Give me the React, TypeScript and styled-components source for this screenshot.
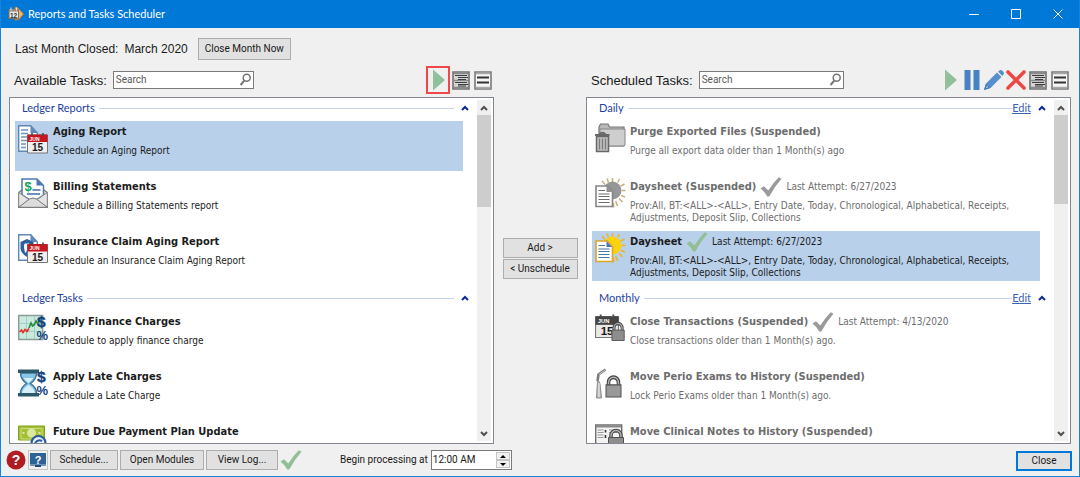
import React from "react";
import styled, { createGlobalStyle, css } from "styled-components";

const ui = '"Liberation Sans", Arial, sans-serif';
const caption = 'Lato, "Open Sans", sans-serif';
const humanist = '"DejaVu Sans Condensed", "DejaVu Sans", sans-serif';
const compact = 'Roboto, "Liberation Sans", sans-serif';

const GlobalStyle = createGlobalStyle`
  *, *::before, *::after { box-sizing: border-box; }
  body { margin: 0; background: #f0f0f0; font-family: ${ui}; color: #1a1a1a; }
  button, input { font: inherit; color: inherit; margin: 0; }
  ul { list-style: none; margin: 0; padding: 0; }
  h1, h2, h3, p { margin: 0; font-weight: normal; }
  svg { display: block; flex: none; }
`;

const Window = styled.div`
  display: flex;
  flex-direction: column;
  height: 100vh;
  min-height: 320px;
  border: 1px solid #1883d7;
  border-top: 0;
  background: #f0f0f0;
`;

const TitleBar = styled.header`
  display: flex;
  align-items: center;
  flex: none;
  height: 28px;
  padding-left: 7px;
  background: #0078d7;
  color: #fff;
`;

const WindowTitle = styled.h1`
  flex: 1;
  padding-left: 4px;
  font: 11px/16px ${caption};
`;

const CaptionButton = styled.button`
  display: flex;
  align-items: center;
  justify-content: center;
  width: 42px;
  height: 28px;
  padding: 0;
  border: 0;
  background: none;
`;

const MonthBar = styled.div`
  display: flex;
  align-items: center;
  flex: none;
  gap: 6px;
  height: 38px;
  padding: 4px 14px 0;
  font-size: 12px;
`;

const MonthValue = styled.span`
  padding-right: 4px;
`;

const PushButton = styled.button<{ $width: number; $tall?: boolean; $primary?: boolean }>`
  width: ${(p) => p.$width}px;
  height: ${(p) => (p.$tall ? 22 : 20)}px;
  padding: 0;
  border: ${(p) => (p.$primary ? "2px solid #0078d7" : "1px solid #adadad")};
  background: #e1e1e1;
  font: 10px/16px ${compact};
  white-space: nowrap;
`;

const Workspace = styled.main`
  display: grid;
  grid-template-columns: minmax(0, 1fr) 92px minmax(0, 1fr);
  grid-template-rows: minmax(0, 1fr);
  flex: 1;
  min-height: 0;
  padding: 0 8px;
`;

const Panel = styled.section`
  display: flex;
  flex-direction: column;
  min-height: 0;
`;

const Toolbar = styled.div`
  display: flex;
  align-items: center;
  flex: none;
  height: 28px;
  margin-bottom: 3px;
  padding-left: 5px;
`;

const ToolbarLabel = styled.label`
  padding-right: 6px;
  font-size: 13px;
  white-space: nowrap;
`;

const SearchBox = styled.div<{ $width: number }>`
  display: flex;
  align-items: center;
  width: ${(p) => p.$width}px;
  height: 18px;
  padding: 0 1px 0 2px;
  border: 1px solid #7a7a7a;
  background: #fff;
`;

const SearchInput = styled.input`
  flex: 1;
  min-width: 0;
  padding: 0;
  border: 0;
  outline: 0;
  background: none;
  font: 10px/16px ${compact};
  &::placeholder { color: #5a5a5a; opacity: 1; }
`;

const Tools = styled.div`
  display: flex;
  margin-left: auto;
`;

const ToolButton = styled.button<{ $marked?: boolean }>`
  display: flex;
  align-items: center;
  justify-content: center;
  width: ${(p) => (p.$marked ? 24 : 22)}px;
  height: 28px;
  padding: 0;
  border: ${(p) => (p.$marked ? "2px solid #f04848" : "0")};
  background: none;
`;

const ListFrame = styled.div`
  display: flex;
  flex: 1;
  min-height: 0;
  border: 1px solid #828790;
  background: #fff;
`;

const ListBody = styled.div`
  flex: 1;
  min-width: 0;
  padding-left: 5px;
  overflow: hidden;
`;

const Scrollbar = styled.div`
  display: flex;
  flex-direction: column;
  align-items: center;
  flex: none;
  width: 14px;
  margin: 2px 2px 2px 0;
  background: #f0f0f0;
`;

const ScrollThumb = styled.div<{ $size: number }>`
  width: 14px;
  height: ${(p) => p.$size}%;
  margin-bottom: auto;
  background: #cdcdcd;
`;

const ScrollArrow = styled.button`
  display: flex;
  align-items: center;
  justify-content: center;
  flex: none;
  width: 14px;
  height: 15px;
  padding: 0;
  border: 0;
  background: none;
`;

const Group = styled.section`
  padding-bottom: 2px;
`;

const GroupHeader = styled.div`
  display: flex;
  align-items: center;
  height: 20px;
  margin-bottom: 3px;
  padding: 0 8px 0 7px;
  font: 11px/16px ${caption};
  color: #1e3f9e;
`;

const GroupName = styled.h2`
  font: inherit;
  white-space: nowrap;
`;

const GroupRule = styled.span`
  flex: 1;
  height: 1px;
  margin-left: 4px;
  background: #c5d3ea;
`;

const EditLink = styled.a`
  color: #3a62b5;
  text-decoration: underline;
`;

const CollapseButton = styled.button`
  display: flex;
  margin-left: 7px;
  padding: 0;
  border: 0;
  background: none;
`;

const TaskRow = styled.li<{ $selected?: boolean; $muted?: boolean }>`
  display: flex;
  gap: 4px;
  height: 50px;
  margin: 0 14px 5px 0;
  padding: 2px 3px;
  color: ${(p) => (p.$muted ? "#6d6d6d" : "#1c1c1c")};
  ${(p) => p.$selected && css`background: #b8d0ea;`}
`;

const TaskIcon = styled.span`
  flex: none;
  width: 31px;
  height: 32px;
`;

const TaskText = styled.div`
  flex: 1;
  min-width: 0;
`;

const TaskHeading = styled.div`
  display: flex;
  align-items: center;
  gap: 4px;
  height: 17px;
`;

const TaskTitle = styled.h3`
  font: bold 11px/17px ${humanist};
  white-space: nowrap;
`;

const Attempt = styled.span`
  font: 10px/16px ${humanist};
`;

const TaskDetail = styled.p`
  padding-top: 5px;
  font: 10px/12px ${humanist};
`;

const Transfer = styled.div`
  display: flex;
  flex-direction: column;
  align-items: center;
  justify-content: center;
  gap: 1px;
  padding-top: 6px;
`;

const StatusBar = styled.footer`
  display: flex;
  align-items: center;
  flex: none;
  gap: 2px;
  height: 32px;
  padding: 0 7px 0 5px;
`;

const IconButton = styled.button<{ $framed?: boolean }>`
  display: flex;
  align-items: center;
  justify-content: center;
  width: 20px;
  height: 20px;
  padding: 0;
  border: ${(p) => (p.$framed ? "1px solid #c4c4c4" : "0")};
  background: none;
`;

const TimeLabel = styled.label`
  padding: 0 1px 0 36px;
  font: 10px/16px ${compact};
`;

const TimeField = styled.div`
  display: flex;
  align-items: center;
  width: 81px;
  height: 20px;
  padding: 1px;
  border: 1px solid #7a7a7a;
  background: #fff;
`;

const TimeInput = styled.input`
  flex: 1;
  min-width: 0;
  padding: 0;
  border: 0;
  outline: 0;
  font: 10px/16px ${compact};
`;

const Spinner = styled.div`
  display: flex;
  flex-direction: column;
  width: 14px;
`;

const SpinButton = styled.button`
  display: flex;
  align-items: center;
  justify-content: center;
  height: 8px;
  padding: 0;
  border: 1px solid #c4c4c4;
  background: #f0f0f0;
`;

const CloseSlot = styled.div`
  margin-left: auto;
`;

const Chevron = ({ down, color = "#505050" }: { down?: boolean; color?: string }) => (
  <svg width="8" height="6" viewBox="0 0 8 6" fill="none" stroke={color} strokeWidth="2">
    <path d={down ? "M1 1l3 3 3-3" : "M1 5l3-3 3 3"} />
  </svg>
);

const Magnifier = () => (
  <svg width="13" height="14" viewBox="0 0 13 14" fill="none" stroke="#757575">
    <circle cx="7.700" cy="4.800" r="3.500" strokeWidth="1.500" />
    <path d="M5.200 7.600L1.600 12" strokeWidth="2" />
  </svg>
);

const Play = () => (
  <svg width="14" height="22" viewBox="0 0 14 22">
    <path d="M2 .5v21L14 11z" fill="#92c199" />
  </svg>
);

const Pause = () => (
  <svg width="16" height="20" viewBox="0 0 16 20" fill="#4682c4">
    <path d="M0.500 0h6v20h-6zM9.500 0h6v20h-6z" />
  </svg>
);

const Pencil = () => (
  <svg width="22" height="22" viewBox="0 0 22 22">
    <path d="M1 21l2-6.500L14 3.500l4.500 4.500L7.500 19z" fill="#568fce" />
    <path d="M1 21l1.900-6 4.200 4z" fill="#3f76b8" />
    <path d="M3.500 18.700l1-1.200" stroke="#e8f0f8" strokeWidth="1.200" />
    <path d="M15 2.800l1.700-1.500q1.200-.9 2.400.2l1.400 1.400q1.100 1.200.1 2.400L19.200 7z" fill="#568fce" />
    <path d="M14.300 2.800l5 5" stroke="#dfe9f4" strokeWidth="1" />
  </svg>
);

const Cross = () => (
  <svg width="20" height="20" viewBox="0 0 20 20" stroke="#ee4a45" strokeWidth="3.600" strokeLinecap="round">
    <path d="M2 2l16 16M18 2L2 18" />
  </svg>
);

const ExpandedRows = () => (
  <svg width="18" height="19" viewBox="0 0 18 19" fill="none">
    <path d="M1 1h16v17H1z" fill="#d4d4d4" stroke="#707070" strokeWidth="1.600" />
    <path d="M2 2.500h14M2 9.500h14M2 16.500h14" stroke="#8a8a8a" strokeWidth="1.600" />
    <path d="M3 4.500h12M6 6.500h10M6 8.500h8M3 11.500h12M6 13.500h10M6 15h8" stroke="#3d3d3d" strokeWidth="1.200" />
  </svg>
);

const CompactRows = () => (
  <svg width="18" height="19" viewBox="0 0 18 19" fill="none">
    <path d="M1 1h16v17H1z" fill="#f6f6f6" stroke="#7a7a7a" strokeWidth="1.600" />
    <path d="M2 2.500h14M2 16.500h14" stroke="#a8a8a8" strokeWidth="1.500" />
    <path d="M3 6.500h12M3 11.500h12" stroke="#333" strokeWidth="2" />
  </svg>
);

const Check = ({ color = "#92bf96" }: { color?: string }) => (
  <svg width="22" height="20" viewBox="0 0 22 20">
    <path d="M.5 11.500l3.500-2.300 4.300 4.300Q13 6 18.800.300l2.700 1.500Q14.500 9.500 9.300 19.500H7.300Q4.500 14.500.5 11.500z" fill={color} />
  </svg>
);

const svgText = { fontFamily: '"Liberation Sans", sans-serif', fontWeight: 700 };

const Calendar = ({ muted }: { muted?: boolean }) => (
  <g>
    <path d="M0 2h20v18H0z" fill={muted ? "#e9e9e9" : "#f1eeee"} stroke="#777" strokeWidth="1" />
    <path d="M0 1.500h20V9H0z" fill={muted ? "#444" : "#c9151e"} />
    <path d="M4.500 0v3M15.500 0v3" stroke="#4b4b4b" strokeWidth="1.600" />
    <text x="2" y="7.500" fontSize="5" fill="#fff" style={svgText}>JUN</text>
    <text x="4.500" y="18" fontSize="10" fill="#1a1a1a" style={svgText}>15</text>
  </g>
);

const Page = ({ stroke = "#5c86b5", fill = "#fff" }: { stroke?: string; fill?: string }) => (
  <g>
    <path d="M.7.700h12L19.300 8v18.300H.7z" fill={fill} stroke={stroke} strokeWidth="1.400" />
    <path d="M12.500.700V8h6.800z" fill={stroke} />
  </g>
);

const Padlock = ({ fill = "#8d8d8d" }: { fill?: string }) => (
  <g>
    <path d="M3 9V6.500a5 5 0 0 1 10 0V9" fill="none" stroke="#444" strokeWidth="3.600" />
    <path d="M3 9V6.500a5 5 0 0 1 10 0V9" fill="none" stroke="#b5b5b5" strokeWidth="1.400" />
    <path d="M.5 8.500h15v11H.5z" fill={fill} stroke="#505050" />
  </g>
);

const DollarPercent = () => (
  <g fill="#15437c" style={svgText}>
    <text x="19" y="13.500" fontSize="15.500" stroke="#15437c" strokeWidth=".4">$</text>
    <text x="18.500" y="27" fontSize="13">%</text>
  </g>
);

type IconName =
  | "aging" | "billing" | "claim" | "finance" | "late" | "payment"
  | "purge" | "sunMuted" | "sun" | "closeMonth" | "perio" | "notes";

const Sun = ({ muted }: { muted?: boolean }) => {
  const ray = muted ? "#c9ae78" : "#edb51f";
  return (
    <g>
      <path
        d="M17.500 0v4M12 .5l1.500 4M7 3l3 3.500M24.500 1l-1.800 3.500M29.500 6l-4 2.200M30.500 12.500h-3.500M30 19l-3.800-1.500M27.500 24l-3.500-3.500M22.500 28l-1.800-5M18.500 29.500v-4.500"
        stroke={ray}
        strokeWidth="1.500"
      />
      <circle cx="17.500" cy="12.500" r="9" fill={muted ? "#969696" : "#fbd20c"} />
      <path d="M1 8h11.500l5 5.500V28.500H1z" fill="#fff" stroke={muted ? "#858585" : "#dba72b"} strokeWidth="1.600" />
      <path d="M11.500 8l5.500 6h-5.500z" fill={muted ? "#8e8e8e" : "#4878ab"} />
      <path d="M3.500 12.500h6.500M3.500 16h11M3.500 18.500h11M3.500 21.500h11M3.500 24.500h11" stroke={muted ? "#6c6c6c" : "#4878ab"} strokeWidth="1.200" />
    </g>
  );
};

const drawings: Record<IconName, React.ReactNode> = {
  aging: (
    <>
      <g transform="translate(0 2)"><Page stroke="#5f88b4" /></g>
      <path d="M3 7h7M3 10.500h7M3 14h6M3 17.500h6M3 21h5M3 24.500h5" stroke="#6d93bb" strokeWidth="1.500" />
      <g transform="translate(9.500 10)"><Calendar /></g>
    </>
  ),
  billing: (
    <>
      <path d="M.7 14.500L15 3.500l14.300 11v14.800H.7z" fill="#d8d8d8" stroke="#777" strokeWidth="1.200" />
      <path d="M4 1h15l6.500 6.500V17L15 24 4 17z" fill="#fff" stroke="#4b79b1" strokeWidth="1.500" />
      <path d="M18.500 1v6.500h7z" fill="#4b79b1" />
      <text x="6.500" y="12.500" fontSize="13" fill="#15a455" style={svgText}>$</text>
      <path d="M14.500 12h8M9 16h13" stroke="#3c6eaa" strokeWidth="1.700" />
      <path d="M.7 14.500L11.500 22 .7 29.300zM29.300 14.500L18.500 22l10.800 7.300z" fill="#e5e5e5" stroke="#888" />
      <path d="M.7 29.300L11.500 21q3.500-2 7 0l10.800 8.300z" fill="#dcdcdc" stroke="#777" />
    </>
  ),
  claim: (
    <>
      <g transform="translate(0 1)"><Page stroke="#5f88b4" /></g>
      <path d="M2.500 9L9 6l6.500 3v6.500Q15 20.500 9 24q-6-3.500-6.500-8.500z" fill="#2e609f" />
      <path d="M6 12q1.200-2.800 3-1.200 1.800-1.600 3 1.200.3 3-1 7.500-1.400 1-2-3.500-.6 4.500-2 3.500Q5.700 15 6 12z" fill="#fff" />
      <g transform="translate(9.500 9.500)"><Calendar /></g>
    </>
  ),
  finance: (
    <>
      <path d="M.7 2.500h24v24H.7z" fill="#c9ebdf" stroke="#8d9a97" strokeWidth="1.400" />
      <path d="M8.500 3v23M16.500 3v23M1 10.500h23M1 18.500h23" stroke="#a3cfc2" />
      <path d="M1.500 19l2-2 1.500 2.500 2-3 2 2 2-3" fill="none" stroke="#e52d27" strokeWidth="1.600" />
      <path d="M11 15l2-5 1.500 3 2-1.500L18 8l2 2.500L23 4" fill="none" stroke="#258a3d" strokeWidth="1.600" />
      <DollarPercent />
    </>
  ),
  late: (
    <>
      <path d="M2.500 5h16q0 6-6 10.500 6 4 6 10h-16q0-6 6-10-6-4.500-6-10.500z" fill="#87c5e6" stroke="#3a7396" strokeWidth="1.500" />
      <path d="M5.500 10h10l-5 5zM4 25q1-5 6.500-8 5.500 3 6.500 8z" fill="#d6eff9" />
      <path d="M0 1.500h21V5H0zM0 25h21v3.500H0z" fill="#2d5a6b" />
      <DollarPercent />
    </>
  ),
  payment: (
    <>
      <path d="M.5 3h26v14H.5z" fill="#a3bf36" stroke="#83a01e" />
      <path d="M3 5.500h21V16H3z" fill="none" stroke="#cddc7c" />
      <circle cx="13.500" cy="10" r="4.500" fill="#dce8a0" />
      <path d="M4.500 9h2v2h-2zM20.500 9h2v2h-2z" fill="#dce8a0" />
      <circle cx="20.500" cy="20" r="7" fill="#e9f0f8" stroke="#2c5c9d" strokeWidth="2.200" />
      <path d="M17 20q3-4 7-2" fill="none" stroke="#2c5c9d" strokeWidth="2" />
    </>
  ),
  purge: (
    <>
      <path d="M4 4l1.500-3H13l1.500 3H29v19H4z" fill="#b9b9b9" stroke="#777" strokeWidth="1.200" />
      <path d="M5 6h25v16l-2 1H5z" fill="#cecece" stroke="#858585" />
      <path d="M0 12h14.500M4.500 11.500Q7.500 8 10.500 11.500" fill="none" stroke="#686868" strokeWidth="2" />
      <path d="M1.500 13.500h12v15h-12z" fill="#c2c2c2" stroke="#686868" strokeWidth="1.500" />
      <path d="M4.500 15.500v11M7.500 15.500v11M10.500 15.500v11" stroke="#7d7d7d" strokeWidth="1.400" />
    </>
  ),
  sunMuted: <Sun muted />,
  sun: <Sun />,
  closeMonth: (
    <>
      <g transform="translate(.5 1.500) scale(1.150)"><Calendar muted /></g>
      <g transform="translate(16.500 9) scale(.82 .95)"><Padlock /></g>
    </>
  ),
  perio: (
    <>
      <path d="M10.500 1.500L3.500 6.500 2.500 13" fill="none" stroke="#7a7a7a" strokeWidth="2.600" />
      <path d="M10 2L4 6.500" stroke="#ccc" />
      <path d="M2.500 12q2 1 2.500 4l1.500 14H1.500z" fill="#bbb" stroke="#8a8a8a" />
      <path d="M4 15v14" stroke="#eee" />
      <g transform="translate(10.500 7.500) scale(1 1.100)"><Padlock fill="#999" /></g>
    </>
  ),
  notes: (
    <>
      <path d="M.7 2h26v20H.7z" fill="#f3f3f3" stroke="#6f6f6f" strokeWidth="1.400" />
      <path d="M1 3.500h25" stroke="#8a8a8a" strokeWidth="2" />
      <path d="M2.500 7h6M2.500 9.500h6M2.500 12h6M2.500 14.500h6M14 7h11M14 9.500h8" stroke="#999" />
      <path d="M10.500 7v2.500M10.500 12v3" stroke="#333" strokeWidth="1.600" />
      <g transform="translate(13 6)"><Padlock /></g>
    </>
  ),
};

const TaskDrawing = ({ name }: { name: IconName }) => (
  <svg width="31" height="32" viewBox="0 0 31 32" aria-hidden="true">{drawings[name]}</svg>
);

type Task = {
  icon: IconName;
  title: string;
  detail: string;
  attempt?: string;
  muted?: boolean;
  selected?: boolean;
};

type TaskGroup = { name: string; editable?: boolean; tasks: Task[] };

const daysheetDetail =
  "Prov:All, BT:<ALL>-<ALL>, Entry Date, Today, Chronological, Alphabetical, Receipts, Adjustments, Deposit Slip, Collections";

const available: TaskGroup[] = [
  {
    name: "Ledger Reports",
    tasks: [
      { icon: "aging", title: "Aging Report", detail: "Schedule an Aging Report", selected: true },
      { icon: "billing", title: "Billing Statements", detail: "Schedule a Billing Statements report" },
      { icon: "claim", title: "Insurance Claim Aging Report", detail: "Schedule an Insurance Claim Aging Report" },
    ],
  },
  {
    name: "Ledger Tasks",
    tasks: [
      { icon: "finance", title: "Apply Finance Charges", detail: "Schedule to apply finance charge" },
      { icon: "late", title: "Apply Late Charges", detail: "Schedule a Late Charge" },
      { icon: "payment", title: "Future Due Payment Plan Update", detail: "" },
    ],
  },
];

const scheduled: TaskGroup[] = [
  {
    name: "Daily",
    editable: true,
    tasks: [
      { icon: "purge", title: "Purge Exported Files (Suspended)", detail: "Purge all export data older than 1 Month(s) ago", muted: true },
      { icon: "sunMuted", title: "Daysheet (Suspended)", detail: daysheetDetail, attempt: "6/27/2023", muted: true },
      { icon: "sun", title: "Daysheet", detail: daysheetDetail, attempt: "6/27/2023", selected: true },
    ],
  },
  {
    name: "Monthly",
    editable: true,
    tasks: [
      { icon: "closeMonth", title: "Close Transactions (Suspended)", detail: "Close transactions older than 1 Month(s) ago.", attempt: "4/13/2020", muted: true },
      { icon: "perio", title: "Move Perio Exams to History (Suspended)", detail: "Lock Perio Exams older than 1 Month(s) ago.", muted: true },
      { icon: "notes", title: "Move Clinical Notes to History (Suspended)", detail: "", muted: true },
    ],
  },
];

const TaskList = ({ groups, thumb }: { groups: TaskGroup[]; thumb: number }) => (
  <ListFrame>
    <ListBody>
      {groups.map((group) => (
        <Group key={group.name}>
          <GroupHeader>
            <GroupName>{group.name}</GroupName>
            <GroupRule />
            {group.editable && <EditLink href="#edit">Edit</EditLink>}
            <CollapseButton aria-label={`Collapse ${group.name}`}><Chevron color="#0b2a9c" /></CollapseButton>
          </GroupHeader>
          <ul>
            {group.tasks.map((task) => (
              <TaskRow key={task.title} $selected={task.selected} $muted={task.muted}>
                <TaskIcon><TaskDrawing name={task.icon} /></TaskIcon>
                <TaskText>
                  <TaskHeading>
                    <TaskTitle>{task.title}</TaskTitle>
                    {task.attempt && (
                      <>
                        <Check color={task.muted ? "#9a9a9a" : undefined} />
                        <Attempt>Last Attempt: {task.attempt}</Attempt>
                      </>
                    )}
                  </TaskHeading>
                  {task.detail && <TaskDetail>{task.detail}</TaskDetail>}
                </TaskText>
              </TaskRow>
            ))}
          </ul>
        </Group>
      ))}
    </ListBody>
    <Scrollbar>
      <ScrollArrow aria-label="Scroll up"><Chevron /></ScrollArrow>
      <ScrollThumb $size={thumb} />
      <ScrollArrow aria-label="Scroll down"><Chevron down /></ScrollArrow>
    </Scrollbar>
  </ListFrame>
);

export default function App() {
  return (
    <>
      <GlobalStyle />
      <Window>
        <TitleBar>
          <svg width="16" height="16" viewBox="0 0 16 16" aria-hidden="true">
            <path d="M7 1l3 1 5.500 6L11 13.500 7 14z" fill="#efba68" stroke="#b07a35" />
            <path d="M1 3.500h9.500v9H1z" fill="#e9e6e2" stroke="#7d6c5d" />
            <path d="M1 3h9.500v2.500H1z" fill="#9a8577" />
            <path d="M3 1.500v3M8.500 1.500v3" stroke="#e9e6e2" />
            <text x="2" y="11.500" fontSize="6.500" fill="#333" style={svgText}>12</text>
          </svg>
          <WindowTitle>Reports and Tasks Scheduler</WindowTitle>
          <CaptionButton aria-label="Minimize">
            <svg width="10" height="10" stroke="#fff"><path d="M0 5.500h10" /></svg>
          </CaptionButton>
          <CaptionButton aria-label="Maximize">
            <svg width="10" height="10" stroke="#fff" fill="none"><path d="M.5.500h9v9h-9z" /></svg>
          </CaptionButton>
          <CaptionButton aria-label="Close window">
            <svg width="10" height="10" stroke="#fff"><path d="M.5.500l9 9M9.500.500l-9 9" /></svg>
          </CaptionButton>
        </TitleBar>

        <MonthBar>
          <span>Last Month Closed:</span>
          <MonthValue>March 2020</MonthValue>
          <PushButton $width={93} $tall>Close Month Now</PushButton>
        </MonthBar>

        <Workspace>
          <Panel>
            <Toolbar>
              <ToolbarLabel htmlFor="available-search">Available Tasks:</ToolbarLabel>
              <SearchBox $width={141}>
                <SearchInput id="available-search" placeholder="Search" />
                <Magnifier />
              </SearchBox>
              <Tools>
                <ToolButton $marked aria-label="Run task"><Play /></ToolButton>
                <ToolButton aria-label="Expanded rows"><ExpandedRows /></ToolButton>
                <ToolButton aria-label="Compact rows"><CompactRows /></ToolButton>
              </Tools>
            </Toolbar>
            <TaskList groups={available} thumb={27} />
          </Panel>

          <Transfer>
            <PushButton $width={75}>Add &gt;</PushButton>
            <PushButton $width={75}>&lt; Unschedule</PushButton>
          </Transfer>

          <Panel>
            <Toolbar>
              <ToolbarLabel htmlFor="scheduled-search">Scheduled Tasks:</ToolbarLabel>
              <SearchBox $width={145}>
                <SearchInput id="scheduled-search" placeholder="Search" />
                <Magnifier />
              </SearchBox>
              <Tools>
                <ToolButton aria-label="Run scheduled task"><Play /></ToolButton>
                <ToolButton aria-label="Suspend"><Pause /></ToolButton>
                <ToolButton aria-label="Edit task"><Pencil /></ToolButton>
                <ToolButton aria-label="Delete task"><Cross /></ToolButton>
                <ToolButton aria-label="Expanded scheduled rows"><ExpandedRows /></ToolButton>
                <ToolButton aria-label="Compact scheduled rows"><CompactRows /></ToolButton>
              </Tools>
            </Toolbar>
            <TaskList groups={scheduled} thumb={26} />
          </Panel>
        </Workspace>

        <StatusBar>
          <IconButton aria-label="Help">
            <svg width="20" height="20" viewBox="0 0 20 20">
              <circle cx="10" cy="10" r="9.500" fill="#b01c22" />
              <text x="10" y="15" fontSize="14" textAnchor="middle" fill="#fff" style={svgText}>?</text>
            </svg>
          </IconButton>
          <IconButton $framed aria-label="Support">
            <svg width="16" height="16" viewBox="0 0 16 16">
              <path d="M0 1h16v13H0z" fill="#2d6296" />
              <path d="M0 12h16v2H0z" fill="#6f93b5" />
              <path d="M5 13h6v2H5z" fill="#1d4b7c" />
              <text x="8" y="11.500" fontSize="11" textAnchor="middle" fill="#fff" style={svgText}>?</text>
            </svg>
          </IconButton>
          <PushButton $width={68}>Schedule...</PushButton>
          <PushButton $width={84}>Open Modules</PushButton>
          <PushButton $width={72}>View Log...</PushButton>
          <Check />
          <TimeLabel htmlFor="begin-time">Begin processing at</TimeLabel>
          <TimeField>
            <TimeInput id="begin-time" defaultValue="12:00 AM" />
            <Spinner>
              <SpinButton aria-label="Later">
                <svg width="6" height="3"><path d="M0 3l3-3 3 3z" /></svg>
              </SpinButton>
              <SpinButton aria-label="Earlier">
                <svg width="6" height="3"><path d="M0 0l3 3 3-3z" /></svg>
              </SpinButton>
            </Spinner>
          </TimeField>
          <CloseSlot>
            <PushButton $width={56} $primary>Close</PushButton>
          </CloseSlot>
        </StatusBar>
      </Window>
    </>
  );
}
